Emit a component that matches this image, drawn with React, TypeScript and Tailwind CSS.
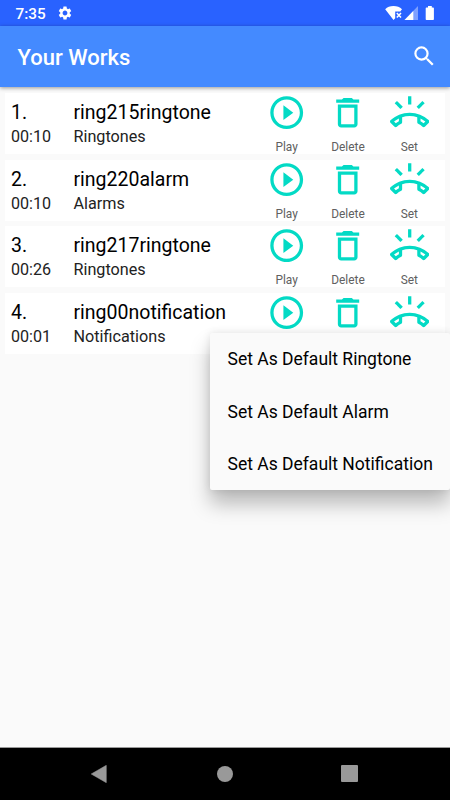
import React from "react";
import { MdOutlineDelete, MdOutlineRingVolume, MdPlayCircleOutline, MdSearch, MdSettings } from "react-icons/md";

const works = [
  { id: 1, time: "00:10", name: "ring215ringtone", kind: "Ringtones", menuOpen: false },
  { id: 2, time: "00:10", name: "ring220alarm", kind: "Alarms", menuOpen: false },
  { id: 3, time: "00:26", name: "ring217ringtone", kind: "Ringtones", menuOpen: false },
  { id: 4, time: "00:01", name: "ring00notification", kind: "Notifications", menuOpen: true },
];

const actions = [
  { label: "Play", Icon: MdPlayCircleOutline },
  { label: "Delete", Icon: MdOutlineDelete },
  { label: "Set", Icon: MdOutlineRingVolume },
];

const menu = ["Set As Default Ringtone", "Set As Default Alarm", "Set As Default Notification"];

function StatusBar() {
  return (
    <div className="flex h-[26px] shrink-0 items-center bg-[#2962ff] pl-[15.5px] text-white">
      <span className="w-[41.5px] pt-[2px] text-[15.3px] leading-[26px] font-medium">7:35</span>
      <MdSettings className="size-4" />
      <svg className="ml-auto h-[26px] w-[70px]" viewBox="0 0 70 26" fill="currentColor">
        <path d="M5.200 9.200C7.300 7 10 6 13.500 6s6.300 1 8.500 3.200L20.300 11.400H15.200V18.200L13.500 20z" />
        <path d="M16.800 13l4.200 4.500M21 13l-4.200 4.500" stroke="currentColor" strokeWidth="1.500" />
        <path d="M38 6v14H24.500z" opacity=".4" />
        <path d="M33.300 10.900V20h-8.800z" />
        <path d="M48 6h3.800v1.500h1.300q.8 0 .8.800v10.900q0 .8-.8.800h-6.600q-.8 0-.8-.8V8.300q0-.8.800-.8H48z" />
      </svg>
    </div>
  );
}

function WorkRow({ work }: { work: (typeof works)[number] }) {
  return (
    <div className="flex h-[61px] bg-white pr-[5px] pl-[6px]">
      <div className="w-[62.500px] shrink-0 pt-[7px] text-black">
        <div className="h-[26px] text-[19.500px] leading-[26px]">{work.id}.</div>
        <div className="text-[16.100px] leading-[21px] text-[#222]">{work.time}</div>
      </div>
      <div className="min-w-0 flex-1 pt-[7px] text-black">
        <div className="h-[26px] text-[19.500px] leading-[26px]">{work.name}</div>
        <div className="text-[16.200px] leading-[21px] text-[#222]">{work.kind}</div>
      </div>
      <div className="flex w-[184px] shrink-0">
        {actions.map(({ label, Icon }) => (
          <div key={label} className="flex flex-1 flex-col items-center">
            <Icon className="size-[39.400px] shrink-0 text-[#03dac5]" />
            {!work.menuOpen && (
              <span className="mt-[7.500px] text-[11.900px] leading-[14px] text-[#606060]">{label}</span>
            )}
          </div>
        ))}
      </div>
    </div>
  );
}

export default function App() {
  return (
    <div className="relative flex h-[800px] w-[450px] flex-col overflow-hidden bg-[#fafafa] font-[Roboto,sans-serif]">
      <StatusBar />
      <header className="flex h-[61px] shrink-0 items-center justify-between bg-[#448aff] pr-[13px] pl-[17.500px] text-white shadow-[0_1px_4px_rgba(0,0,0,0.4)]">
        <h1 className="pt-[1.500px] text-[22px] font-medium">Your Works</h1>
        <MdSearch className="size-[26.500px]" />
      </header>
      <main className="flex flex-1 flex-col gap-[5.670px] px-[5px] pt-[6px]">
        {works.map((work) => (
          <WorkRow key={work.id} work={work} />
        ))}
      </main>
      <nav className="grid h-[53px] shrink-0 grid-cols-[1fr_auto_1fr] items-center border-t border-[#999] bg-black pb-[1px] text-[#999]">
        <svg className="mr-[110px] h-[18px] w-4 justify-self-end" viewBox="0 0 16 18" fill="currentColor">
          <path d="M15.300.3v17.400L.2 9z" stroke="currentColor" strokeWidth=".5" strokeLinejoin="round" />
        </svg>
        <div className="size-4 rounded-full bg-[#999]" />
        <div className="ml-[108px] h-[17px] w-[17px] rounded-[1px] bg-[#999]" />
      </nav>
      <div className="absolute top-[332.500px] left-[210px] h-[157.500px] w-[240px] rounded-[2px] bg-[#fafafa] shadow-[0_14px_20px_0px_rgba(0,0,0,0.26),0_0_8px_rgba(0,0,0,0.1)]">
        {menu.map((item) => (
          <div key={item} className="flex h-[52.500px] items-center pt-[1.500px] pl-[17.500px] text-[17.500px] whitespace-nowrap text-black">
            {item}
          </div>
        ))}
      </div>
    </div>
  );
}
